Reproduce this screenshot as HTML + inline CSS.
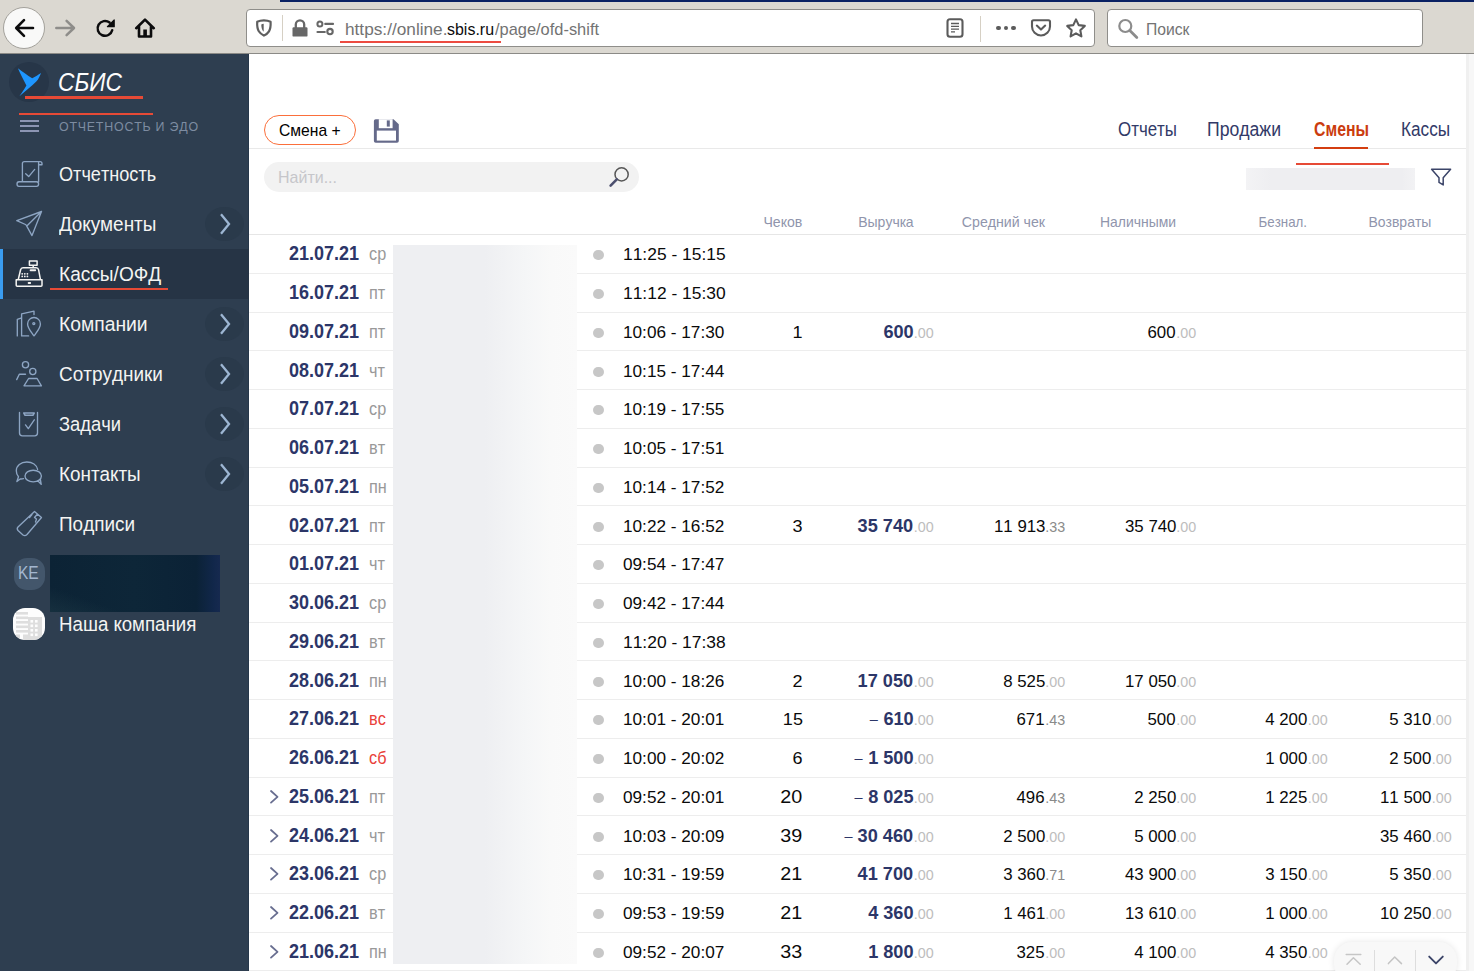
<!DOCTYPE html>
<html lang="ru"><head><meta charset="utf-8"><title>СБИС — Смены</title>
<style>
html,body{margin:0;padding:0;}
body{width:1474px;height:971px;overflow:hidden;position:relative;background:#fff;font-family:"Liberation Sans",sans-serif;font-kerning:none;}
.b{position:absolute;display:block;}
.t{position:absolute;white-space:pre;line-height:1;font-kerning:none;}
</style></head><body>
<div class="b" style="left:0px;top:0px;width:1474px;height:53px;background:#dbd8d1;"></div>
<div class="b" style="left:0px;top:53px;width:1474px;height:1px;background:#8b8a86;"></div>
<div class="b" style="left:280px;top:0px;width:1194px;height:2px;background:#0a2163;"></div>
<div class="b" style="left:3px;top:7px;width:42px;height:42px;border-radius:50%;background:#f9f9f8;border:1px solid #a3a19b;box-sizing:border-box;"></div>
<svg class="b" style="left:11.5px;top:16px;" width="24" height="24" viewBox="0 0 24 24"><path d="M21 12H4.5M12 4.2L4.2 12l7.8 7.8" fill="none" stroke="#0c0c0d" stroke-width="2.6" stroke-linecap="round" stroke-linejoin="round"/></svg>
<svg class="b" style="left:54px;top:17px;" width="23" height="22" viewBox="0 0 23 22"><path d="M2.300 11h17.500M12.600 3.800l7.400 7.200-7.400 7.200" fill="none" stroke="#8e8d8a" stroke-width="2.500" stroke-linecap="round" stroke-linejoin="round"/></svg>
<svg class="b" style="left:94px;top:17px;" width="23" height="22" viewBox="0 0 23 22"><path d="M18.200 13.200a7.400 7.400 0 1 1-2.600-7.600" fill="none" stroke="#0c0c0d" stroke-width="2.500" stroke-linecap="round"/><path d="M13.400 9.700h6.800V2.900z" fill="#0c0c0d" stroke="#0c0c0d" stroke-width="1.200" stroke-linejoin="round"/></svg>
<svg class="b" style="left:134px;top:16px;" width="22" height="24" viewBox="0 0 22 24"><path d="M2.2 12.2L11 3.6l8.8 8.6M5 10.5v10h12v-10" fill="none" stroke="#0c0c0d" stroke-width="2.6" stroke-linecap="round" stroke-linejoin="round"/><rect x="9.3" y="13.5" width="3.6" height="6.5" fill="#0c0c0d"/></svg>
<div class="b" style="left:246px;top:9px;width:849px;height:38px;background:#fff;border:1px solid #8f8e8a;border-radius:4px;box-sizing:border-box;"></div>
<svg class="b" style="left:254px;top:17px;" width="20" height="22" viewBox="0 0 20 22"><path d="M9.900 3.400C7.500 3.400 5 3.900 3.200 4.800 3 9 3.400 12 4.800 14.300 6 16.200 7.800 17.500 9.900 18.600 12 17.500 13.800 16.200 15 14.300 16.400 12 16.800 9 16.600 4.800 14.800 3.900 12.300 3.400 9.900 3.400z" fill="none" stroke="#5f5f5f" stroke-width="2.200" stroke-linejoin="round"/><path d="M9.700 6.800v8C8 13.300 7.300 10.300 7.300 7.400 8 7.100 8.900 6.900 9.700 6.800z" fill="#5f5f5f"/></svg>
<div class="b" style="left:282px;top:15px;width:1px;height:26px;background:#d6d0c4;"></div>
<svg class="b" style="left:291px;top:17px;" width="18" height="22" viewBox="0 0 18 22"><path d="M4.800 11V7.600a4.200 4.200 0 0 1 8.400 0V11" fill="none" stroke="#676767" stroke-width="2.300"/><rect x="1.500" y="10.200" width="15" height="9.400" rx="1.200" fill="#676767"/></svg>
<svg class="b" style="left:315px;top:18px;" width="22" height="20" viewBox="0 0 22 20"><circle cx="4.900" cy="5.900" r="2.500" fill="none" stroke="#676767" stroke-width="2"/><path d="M10.300 5.900H18" stroke="#676767" stroke-width="2.200" stroke-linecap="round"/><circle cx="15" cy="13.600" r="2.700" fill="none" stroke="#676767" stroke-width="2.100"/><path d="M2.500 14h7.300" stroke="#676767" stroke-width="2.200" stroke-linecap="round"/></svg>
<div class="t" style="top:21px;font-size:17px;color:#737373;left:344.50px;transform:scaleX(1.0136);transform-origin:0 50%;">https://online.</div>
<div class="t" style="top:21px;font-size:17px;color:#0c0c0d;left:447.00px;transform:scaleX(0.9387);transform-origin:0 50%;">sbis.ru</div>
<div class="t" style="top:21px;font-size:17px;color:#737373;left:494.50px;transform:scaleX(0.9653);transform-origin:0 50%;">/page/ofd-shift</div>
<div class="b" style="left:340.3px;top:41.35px;width:160.7px;height:1.95px;background:#ec4b40;"></div>
<svg class="b" style="left:945px;top:17px;" width="20" height="22" viewBox="0 0 20 22"><rect x="2.500" y="2.200" width="15" height="17.600" rx="2.500" fill="none" stroke="#5b5b5b" stroke-width="2.100"/><path d="M6 6.500h8M6 9.300h8M6 12.100h8M6 14.900h4" stroke="#5b5b5b" stroke-width="1.300"/></svg>
<div class="b" style="left:980px;top:16px;width:1px;height:26px;background:#d6d0c4;"></div>
<div class="b" style="left:996.4000000000001px;top:25.6px;width:4.6px;height:4.6px;border-radius:50%;background:#5b5b5b;"></div>
<div class="b" style="left:1003.7px;top:25.6px;width:4.6px;height:4.6px;border-radius:50%;background:#5b5b5b;"></div>
<div class="b" style="left:1011.0px;top:25.6px;width:4.6px;height:4.6px;border-radius:50%;background:#5b5b5b;"></div>
<svg class="b" style="left:1030px;top:18px;" width="22" height="20" viewBox="0 0 22 20"><path d="M3.500 2.300h15a1.500 1.500 0 0 1 1.500 1.500v4.700a9 9 0 0 1-18 0V3.800a1.500 1.500 0 0 1 1.500-1.500z" fill="none" stroke="#5b5b5b" stroke-width="2.100"/><path d="M6.800 7.600L11 11.600l4.200-4" fill="none" stroke="#5b5b5b" stroke-width="2.100" stroke-linecap="round" stroke-linejoin="round"/></svg>
<svg class="b" style="left:1065px;top:17px;" width="22" height="22" viewBox="0 0 22 22"><path d="M11 2.400l2.700 5.700 6.100.8-4.500 4.300 1.100 6.200L11 16.400 5.600 19.400l1.100-6.200L2.200 8.900l6.100-.8z" fill="none" stroke="#5b5b5b" stroke-width="2.100" stroke-linejoin="round"/></svg>
<div class="b" style="left:1107px;top:9px;width:316px;height:38px;background:#fff;border:1px solid #8f8e8a;border-radius:4px;box-sizing:border-box;"></div>
<svg class="b" style="left:1116px;top:17px;" width="24" height="24" viewBox="0 0 24 24"><circle cx="9.300" cy="9" r="6" fill="none" stroke="#8c8c8c" stroke-width="2.200"/><path d="M13.800 13.600l7 7" stroke="#8c8c8c" stroke-width="2.800" stroke-linecap="round"/></svg>
<div class="t" style="top:21px;font-size:16.3px;color:#737373;left:1146.20px;transform:scaleX(0.9631);transform-origin:0 50%;">Поиск</div>
<div class="b" style="left:0px;top:54px;width:249px;height:917px;background:#2e3e50;"></div>
<div class="b" style="left:248px;top:54px;width:1px;height:917px;background:#26374a;"></div>
<div class="b" style="left:9px;top:62px;width:40px;height:40px;border-radius:50%;background:#273648;"></div>
<svg class="b" style="left:9px;top:62px;" width="40" height="40" viewBox="9 62 40 40"><path d="M17.900 68.200C22 71 27.500 75.600 32.200 78.200c3.300-1.600 6-3.600 8.900-5.300-1.300 3-2.600 6.200-4.800 8.600C31.400 86.500 24.500 91.500 19.400 96.200c2.300-3.400 5-7 7-10.800C23.500 80 20.500 74 17.900 68.200z" fill="#1e96ff"/></svg>
<div class="t" style="top:70px;font-size:25px;color:#fdfdfd;font-style:italic;left:58.20px;transform:scaleX(0.9109);transform-origin:0 50%;">СБИС</div>
<div class="b" style="left:25px;top:96px;width:118px;height:2.6px;background:#e64a36;"></div>
<div class="b" style="left:19px;top:112.6px;width:134px;height:2.6px;background:#e64a36;"></div>
<div class="b" style="left:20px;top:120.3px;width:18.5px;height:1.6px;background:#8c95b3;"></div>
<div class="b" style="left:20px;top:125.3px;width:18.5px;height:1.6px;background:#8c95b3;"></div>
<div class="b" style="left:20px;top:130.3px;width:18.5px;height:1.6px;background:#8c95b3;"></div>
<div class="t" style="top:120px;font-size:13px;color:#7d8ca1;letter-spacing:0.8px;left:59.30px;transform:scaleX(0.9556);transform-origin:0 50%;">ОТЧЕТНОСТЬ И ЭДО</div>
<div class="b" style="left:0px;top:249px;width:249px;height:50px;background:#263445;"></div>
<div class="b" style="left:0px;top:249px;width:3px;height:50px;background:#3a9cf0;"></div>
<div class="t" style="top:165px;font-size:19.3px;color:#f4f4f2;left:59.00px;transform:scaleX(0.9408);transform-origin:0 50%;">Отчетность</div>
<div class="t" style="top:215px;font-size:19.3px;color:#f4f4f2;left:59.00px;transform:scaleX(0.9820);transform-origin:0 50%;">Документы</div>
<div class="b" style="left:205px;top:206.7px;width:39px;height:34.6px;border-radius:50%;background:#2a3a4b;"></div>
<svg class="b" style="left:216px;top:212px;" width="16" height="24" viewBox="0 0 16 24"><path d="M5 2.200l8 9.800-8 9.800" fill="none" stroke="#9db6d3" stroke-width="2.300" stroke-linejoin="miter"/></svg>
<div class="t" style="top:265px;font-size:19.3px;color:#f4f4f2;left:59.00px;transform:scaleX(0.9910);transform-origin:0 50%;">Кассы/ОФД</div>
<div class="t" style="top:315px;font-size:19.3px;color:#f4f4f2;left:59.00px;transform:scaleX(1.0006);transform-origin:0 50%;">Компании</div>
<div class="b" style="left:205px;top:306.7px;width:39px;height:34.6px;border-radius:50%;background:#2a3a4b;"></div>
<svg class="b" style="left:216px;top:312px;" width="16" height="24" viewBox="0 0 16 24"><path d="M5 2.200l8 9.800-8 9.800" fill="none" stroke="#9db6d3" stroke-width="2.300" stroke-linejoin="miter"/></svg>
<div class="t" style="top:365px;font-size:19.3px;color:#f4f4f2;left:59.00px;transform:scaleX(0.9824);transform-origin:0 50%;">Сотрудники</div>
<div class="b" style="left:205px;top:356.7px;width:39px;height:34.6px;border-radius:50%;background:#2a3a4b;"></div>
<svg class="b" style="left:216px;top:362px;" width="16" height="24" viewBox="0 0 16 24"><path d="M5 2.200l8 9.800-8 9.800" fill="none" stroke="#9db6d3" stroke-width="2.300" stroke-linejoin="miter"/></svg>
<div class="t" style="top:415px;font-size:19.3px;color:#f4f4f2;left:59.00px;transform:scaleX(0.9522);transform-origin:0 50%;">Задачи</div>
<div class="b" style="left:205px;top:406.7px;width:39px;height:34.6px;border-radius:50%;background:#2a3a4b;"></div>
<svg class="b" style="left:216px;top:412px;" width="16" height="24" viewBox="0 0 16 24"><path d="M5 2.200l8 9.800-8 9.800" fill="none" stroke="#9db6d3" stroke-width="2.300" stroke-linejoin="miter"/></svg>
<div class="t" style="top:465px;font-size:19.3px;color:#f4f4f2;left:59.00px;transform:scaleX(0.9800);transform-origin:0 50%;">Контакты</div>
<div class="b" style="left:205px;top:456.7px;width:39px;height:34.6px;border-radius:50%;background:#2a3a4b;"></div>
<svg class="b" style="left:216px;top:462px;" width="16" height="24" viewBox="0 0 16 24"><path d="M5 2.200l8 9.800-8 9.800" fill="none" stroke="#9db6d3" stroke-width="2.300" stroke-linejoin="miter"/></svg>
<div class="t" style="top:515px;font-size:19.3px;color:#f4f4f2;left:59.00px;transform:scaleX(0.9818);transform-origin:0 50%;">Подписи</div>
<div class="b" style="left:50px;top:287.5px;width:118px;height:2.4px;background:#e64a36;"></div>
<svg class="b" style="left:14px;top:159px;" width="30" height="30" viewBox="0 0 30 30"><g fill="none" stroke="#8da5c3" stroke-width="1.350" stroke-linecap="round" stroke-linejoin="round"><path d="M8.400 22.700V4.600q0-2 2-2h15.600q2 0 2 2v1.100h-3.400M24.600 3.600V22.700M5 22.700h17.500q2.100 0 2.100 2.300t-2.100 2.300H5q-2 0-2-2.300t2-2.300z"/><path d="M11.700 14.800l3 2.800 6-7.200" /></g></svg>
<svg class="b" style="left:14px;top:209px;" width="30" height="30" viewBox="0 0 30 30"><g fill="none" stroke="#8da5c3" stroke-width="1.350" stroke-linecap="round" stroke-linejoin="round"><path d="M27.500 2.500L2.800 11.700l8.700 3.800M27.500 2.500L18 26.600l-5.800-10.400M27.500 2.500L12.800 17"/></g></svg>
<svg class="b" style="left:14px;top:259px;" width="30" height="30" viewBox="0 0 30 30"><g fill="none" stroke="#f4f4f2" stroke-width="1.350" stroke-linecap="round" stroke-linejoin="round"><path d="M15.400 2h7.700v4.200h-7.700zM19.200 6.200v2.600M4.200 20.800L6.600 10.800Q7 8.800 9 8.800h13.200q2 0 2.400 2L26.500 20.800M2.200 20.800h25.800v5.500q0 1-1 1H3.200q-1 0-1-1z" stroke-width="1.500"/><path d="M8.200 14.800h.01M10.800 14.800h.01M13.400 14.800h.01M8.200 17.400h.01M10.800 17.400h.01M13.400 17.400h.01M14.600 24h1.600" stroke-width="1.800"/><path d="M16.600 11.300h4.600" stroke-width="1.900"/></g></svg>
<svg class="b" style="left:14px;top:309px;" width="30" height="30" viewBox="0 0 30 30"><g fill="none" stroke="#8da5c3" stroke-width="1.350" stroke-linecap="round" stroke-linejoin="round"><path d="M3.300 26.900V10.300l4.300-1.500M7.600 26.900V4.900L20 2.100v3.400M7.600 26.900h7"/><path d="M20 26.900c-2.900-4.300-6.400-7.800-6.400-12a6.400 6.400 0 0 1 12.800 0c0 4.200-3.500 7.700-6.400 12z"/><circle cx="19.800" cy="14.600" r="1" /></g></svg>
<svg class="b" style="left:14px;top:359px;" width="30" height="30" viewBox="0 0 30 30"><g fill="none" stroke="#8da5c3" stroke-width="1.350" stroke-linecap="round" stroke-linejoin="round"><circle cx="11.500" cy="5.700" r="3.100"/><circle cx="18.800" cy="12.500" r="3.100"/><path d="M2.700 20.600l2.600-5.400h6.200M10 26.800l4.600-7.300h8.500l4.300 7.300z"/></g></svg>
<svg class="b" style="left:14px;top:409px;" width="30" height="30" viewBox="0 0 30 30"><g fill="none" stroke="#8da5c3" stroke-width="1.350" stroke-linecap="round" stroke-linejoin="round"><path d="M5.500 3.500V24q0 2.800 2.800 2.800h12.400q2.800 0 2.800-2.800V3.500"/><path d="M9.800 4h10.400l-1.300 2.300h-7.800z" stroke-width="1.600"/><path d="M11.500 15.900l2.800 3.700 6-8.800"/></g></svg>
<svg class="b" style="left:14px;top:459px;" width="30" height="30" viewBox="0 0 30 30"><g fill="none" stroke="#8da5c3" stroke-width="1.350" stroke-linecap="round" stroke-linejoin="round"><path d="M9.500 19.600c-1.200.4-2.300.5-3.300.4l-3.300 2.500 1.600-4.800C3 16 2.300 13.900 2.300 11.700 2.300 6.800 6.800 3 12.800 3c5.600 0 9.900 3 10.800 7.400"/><path d="M27.400 17c0 3.300-3.600 5.800-8.200 5.800S11 20.300 11 17s3.600-5.800 8.200-5.800 8.200 2.500 8.200 5.800zM23.800 21.800l3.400 3.600-.9-5.400"/></g></svg>
<svg class="b" style="left:14px;top:509px;" width="30" height="30" viewBox="0 0 30 30"><g fill="none" stroke="#8da5c3" stroke-width="1.350" stroke-linecap="round" stroke-linejoin="round"><path d="M20.500 2.500l7 6-14.500 17q-2 2-4 .500l-5-4.500q-1.500-2 0-3.500z M18 5.500l-2.500 3M23.500 5l-3 3.500 2 1.500-1 3"/></g></svg>
<div class="b" style="left:13.5px;top:558px;width:31.5px;height:32px;border-radius:13px;background:#43566b;"></div>
<div class="t" style="top:564px;font-size:18px;color:#a3b6cf;left:17.80px;transform:scaleX(0.8620);transform-origin:0 50%;">KE</div>
<div class="b" style="left:50px;top:555px;width:170px;height:57px;background:linear-gradient(90deg,#0c2335 0%,#0d2638 50%,#0b2236 86%,#11274a 96%,#16294f 100%);"></div>
<div class="b" style="left:50px;top:555px;width:170px;height:57px;background:linear-gradient(20deg,rgba(40,70,80,.35) 0%,rgba(0,0,0,0) 22%);"></div>
<div class="b" style="left:13px;top:608px;width:32px;height:32px;border-radius:12px;background:#fdfdfd;overflow:hidden;"></div>
<svg class="b" style="left:13px;top:608px;" width="32" height="32" viewBox="0 0 32 32"><clipPath id="cp"><rect width="32" height="32" rx="12"/></clipPath><g clip-path="url(#cp)" fill="#dedede"><rect x="3" y="4" width="12" height="2.600"/><rect x="3" y="8.500" width="12" height="2.600"/><rect x="3" y="13" width="12" height="2.600"/><rect x="3" y="17.500" width="12" height="2.600"/><rect x="3" y="22" width="12" height="2.600"/><rect x="3" y="26.500" width="4" height="6"/><rect x="10" y="26.500" width="5" height="6"/><rect x="15" y="9" width="14" height="23"/><g fill="#fdfdfd"><rect x="17.500" y="12" width="2.600" height="2.600"/><rect x="22" y="12" width="2.600" height="2.600"/><rect x="17.500" y="16.500" width="2.600" height="2.600"/><rect x="22" y="16.500" width="2.600" height="2.600"/><rect x="17.500" y="21" width="2.600" height="2.600"/><rect x="22" y="21" width="2.600" height="2.600"/><rect x="17.500" y="25.500" width="2.600" height="2.600"/><rect x="22" y="25.500" width="2.600" height="2.600"/></g></g></svg>
<div class="t" style="top:615px;font-size:19.3px;color:#f4f4f2;left:59.40px;transform:scaleX(0.9698);transform-origin:0 50%;">Наша компания</div>
<div class="b" style="left:249px;top:54px;width:1217px;height:917px;background:#fff;"></div>
<div class="b" style="left:1466px;top:54px;width:8px;height:917px;background:linear-gradient(90deg,#f0f0f0 0,#f0f0f0 3px,#f7f7f7 3px);"></div>
<div class="b" style="left:264px;top:115px;width:92px;height:30px;border:1px solid #fb6f3b;border-radius:15px;box-sizing:border-box;background:#fff;"></div>
<div class="t" style="top:122px;font-size:17px;color:#000;left:279.40px;transform:scaleX(0.9206);transform-origin:0 50%;">Смена +</div>
<svg class="b" style="left:373px;top:117.6px;" width="27" height="26" viewBox="0 0 27 26"><path d="M2.700 1.200h17.800l5.300 5V23a1.800 1.800 0 0 1-1.800 1.800H2.700A1.800 1.800 0 0 1 .900 23V3a1.800 1.800 0 0 1 1.800-1.800z" fill="#656a8a"/><rect x="3.800" y="12.600" width="19.200" height="10" fill="#fff"/><rect x="5.800" y="1.200" width="13.800" height="9" fill="#fff"/><rect x="13.800" y="2.400" width="3" height="6.200" fill="#656a8a"/></svg>
<div class="b" style="left:249px;top:148px;width:1217px;height:1px;background:#e9e9e9;"></div>
<div class="t" style="top:120px;font-size:19.5px;color:#323a68;left:1118.30px;transform:scaleX(0.8664);transform-origin:0 50%;">Отчеты</div>
<div class="t" style="top:120px;font-size:19.5px;color:#323a68;left:1207.30px;transform:scaleX(0.9037);transform-origin:0 50%;">Продажи</div>
<div class="t" style="top:120px;font-size:19.5px;color:#cb3c0f;font-weight:700;left:1313.50px;transform:scaleX(0.8114);transform-origin:0 50%;">Смены</div>
<div class="t" style="top:120px;font-size:19.5px;color:#323a68;left:1400.60px;transform:scaleX(0.8830);transform-origin:0 50%;">Кассы</div>
<div class="b" style="left:1314px;top:146.6px;width:54px;height:2.2px;background:#d43e10;"></div>
<div class="b" style="left:1296px;top:162.8px;width:93px;height:2.2px;background:#e64a36;"></div>
<div class="b" style="left:264px;top:162px;width:375px;height:30px;background:#f2f2f2;border-radius:15px;"></div>
<div class="t" style="top:169px;font-size:17px;color:#c6c6ca;left:278.20px;transform:scaleX(0.9413);transform-origin:0 50%;">Найти...</div>
<svg class="b" style="left:607px;top:165px;" width="25" height="24" viewBox="0 0 25 24"><circle cx="14.600" cy="9.400" r="6.600" fill="none" stroke="#565656" stroke-width="1.500"/><path d="M9.800 14.400L3.600 20.600" stroke="#4c4f6e" stroke-width="2.600" stroke-linecap="round"/></svg>
<div class="b" style="left:1246px;top:168px;width:169px;height:22px;background:linear-gradient(90deg,#f3f3f5 0,#eeeef1 15%,#eeeef1 92%,#f2f2f4 100%);"></div>
<svg class="b" style="left:1429px;top:167.3px;" width="24" height="20" viewBox="0 0 24 20"><path d="M2.600 2.200h19l-7.400 8.500v7.200l-4.200-2.500v-4.700z" fill="none" stroke="#3b4468" stroke-width="1.500" stroke-linejoin="round"/></svg>
<div class="t" style="top:215px;font-size:14.3px;color:#9095ac;right:672.00px;transform:scaleX(0.9886);transform-origin:100% 50%;">Чеков</div>
<div class="t" style="top:215px;font-size:14.3px;color:#9095ac;right:560.50px;transform:scaleX(0.9783);transform-origin:100% 50%;">Выручка</div>
<div class="t" style="top:215px;font-size:14.3px;color:#9095ac;right:429.00px;transform:scaleX(0.9908);transform-origin:100% 50%;">Средний чек</div>
<div class="t" style="top:215px;font-size:14.3px;color:#9095ac;right:298.00px;transform:scaleX(0.9736);transform-origin:100% 50%;">Наличными</div>
<div class="t" style="top:215px;font-size:14.3px;color:#9095ac;right:166.50px;transform:scaleX(0.9314);transform-origin:100% 50%;">Безнал.</div>
<div class="t" style="top:215px;font-size:14.3px;color:#9095ac;right:42.50px;transform:scaleX(0.9780);transform-origin:100% 50%;">Возвраты</div>
<div class="b" style="left:249px;top:234px;width:1217px;height:1px;background:#e6e6e6;"></div>
<div class="b" style="left:249px;top:273px;width:1217px;height:1px;background:#ededed;"></div>
<div class="t" style="top:244px;font-size:19.6px;color:#2c3668;font-weight:700;left:289.00px;transform:scaleX(0.9175);transform-origin:0 50%;">21.07.21</div>
<div class="t" style="top:246px;font-size:17.5px;color:#999;left:369.00px;transform:scaleX(0.9300);transform-origin:0 50%;">ср</div>
<div class="b" style="left:593.3px;top:250px;width:10.4px;height:10.4px;border-radius:50%;background:#c7c7c7;"></div>
<div class="t" style="top:246px;font-size:17px;color:#0a0a0a;left:622.60px;transform:scaleX(1.0239);transform-origin:0 50%;">11:25 - 15:15</div>
<div class="b" style="left:249px;top:312px;width:1217px;height:1px;background:#ededed;"></div>
<div class="t" style="top:283px;font-size:19.6px;color:#2c3668;font-weight:700;left:289.00px;transform:scaleX(0.9175);transform-origin:0 50%;">16.07.21</div>
<div class="t" style="top:285px;font-size:17.5px;color:#999;left:369.00px;transform:scaleX(0.9300);transform-origin:0 50%;">пт</div>
<div class="b" style="left:593.3px;top:289px;width:10.4px;height:10.4px;border-radius:50%;background:#c7c7c7;"></div>
<div class="t" style="top:285px;font-size:17px;color:#0a0a0a;left:622.60px;transform:scaleX(1.0239);transform-origin:0 50%;">11:12 - 15:30</div>
<div class="b" style="left:249px;top:350px;width:1217px;height:1px;background:#ededed;"></div>
<div class="t" style="top:322px;font-size:19.6px;color:#2c3668;font-weight:700;left:289.00px;transform:scaleX(0.9175);transform-origin:0 50%;">09.07.21</div>
<div class="t" style="top:324px;font-size:17.5px;color:#999;left:369.00px;transform:scaleX(0.9300);transform-origin:0 50%;">пт</div>
<div class="b" style="left:593.3px;top:328px;width:10.4px;height:10.4px;border-radius:50%;background:#c7c7c7;"></div>
<div class="t" style="top:324px;font-size:17px;color:#0a0a0a;left:622.60px;transform:scaleX(1.0111);transform-origin:0 50%;">10:06 - 17:30</div>
<div class="t" style="top:324px;font-size:17px;color:#0a0a0a;right:671.50px;transform:scaleX(1.0600);transform-origin:100% 50%;">1</div>
<div class="t" style="top:322px;font-size:19px;color:#2c3668;font-weight:700;right:560.50px;transform:scaleX(0.9550);transform-origin:100% 50%;">600</div>
<div class="t" style="top:326px;font-size:14.3px;color:#bdbdbd;left:913.80px;">.00</div>
<div class="t" style="top:324px;font-size:16.5px;color:#0a0a0a;right:298.00px;transform:scaleX(1.0200);transform-origin:100% 50%;">600</div>
<div class="t" style="top:326px;font-size:14.3px;color:#bdbdbd;left:1176.30px;">.00</div>
<div class="b" style="left:249px;top:389px;width:1217px;height:1px;background:#ededed;"></div>
<div class="t" style="top:361px;font-size:19.6px;color:#2c3668;font-weight:700;left:289.00px;transform:scaleX(0.9175);transform-origin:0 50%;">08.07.21</div>
<div class="t" style="top:363px;font-size:17.5px;color:#999;left:369.00px;transform:scaleX(0.9300);transform-origin:0 50%;">чт</div>
<div class="b" style="left:593.3px;top:367px;width:10.4px;height:10.4px;border-radius:50%;background:#c7c7c7;"></div>
<div class="t" style="top:363px;font-size:17px;color:#0a0a0a;left:622.60px;transform:scaleX(1.0111);transform-origin:0 50%;">10:15 - 17:44</div>
<div class="b" style="left:249px;top:428px;width:1217px;height:1px;background:#ededed;"></div>
<div class="t" style="top:399px;font-size:19.6px;color:#2c3668;font-weight:700;left:289.00px;transform:scaleX(0.9175);transform-origin:0 50%;">07.07.21</div>
<div class="t" style="top:401px;font-size:17.5px;color:#999;left:369.00px;transform:scaleX(0.9300);transform-origin:0 50%;">ср</div>
<div class="b" style="left:593.3px;top:405px;width:10.4px;height:10.4px;border-radius:50%;background:#c7c7c7;"></div>
<div class="t" style="top:401px;font-size:17px;color:#0a0a0a;left:622.60px;transform:scaleX(1.0111);transform-origin:0 50%;">10:19 - 17:55</div>
<div class="b" style="left:249px;top:467px;width:1217px;height:1px;background:#ededed;"></div>
<div class="t" style="top:438px;font-size:19.6px;color:#2c3668;font-weight:700;left:289.00px;transform:scaleX(0.9175);transform-origin:0 50%;">06.07.21</div>
<div class="t" style="top:440px;font-size:17.5px;color:#999;left:369.00px;transform:scaleX(0.9300);transform-origin:0 50%;">вт</div>
<div class="b" style="left:593.3px;top:444px;width:10.4px;height:10.4px;border-radius:50%;background:#c7c7c7;"></div>
<div class="t" style="top:440px;font-size:17px;color:#0a0a0a;left:622.60px;transform:scaleX(1.0111);transform-origin:0 50%;">10:05 - 17:51</div>
<div class="b" style="left:249px;top:505px;width:1217px;height:1px;background:#ededed;"></div>
<div class="t" style="top:477px;font-size:19.6px;color:#2c3668;font-weight:700;left:289.00px;transform:scaleX(0.9175);transform-origin:0 50%;">05.07.21</div>
<div class="t" style="top:479px;font-size:17.5px;color:#999;left:369.00px;transform:scaleX(0.9300);transform-origin:0 50%;">пн</div>
<div class="b" style="left:593.3px;top:483px;width:10.4px;height:10.4px;border-radius:50%;background:#c7c7c7;"></div>
<div class="t" style="top:479px;font-size:17px;color:#0a0a0a;left:622.60px;transform:scaleX(1.0111);transform-origin:0 50%;">10:14 - 17:52</div>
<div class="b" style="left:249px;top:544px;width:1217px;height:1px;background:#ededed;"></div>
<div class="t" style="top:516px;font-size:19.6px;color:#2c3668;font-weight:700;left:289.00px;transform:scaleX(0.9175);transform-origin:0 50%;">02.07.21</div>
<div class="t" style="top:518px;font-size:17.5px;color:#999;left:369.00px;transform:scaleX(0.9300);transform-origin:0 50%;">пт</div>
<div class="b" style="left:593.3px;top:522px;width:10.4px;height:10.4px;border-radius:50%;background:#c7c7c7;"></div>
<div class="t" style="top:518px;font-size:17px;color:#0a0a0a;left:622.60px;transform:scaleX(1.0111);transform-origin:0 50%;">10:22 - 16:52</div>
<div class="t" style="top:518px;font-size:17px;color:#0a0a0a;right:671.50px;transform:scaleX(1.0600);transform-origin:100% 50%;">3</div>
<div class="t" style="top:516px;font-size:19px;color:#2c3668;font-weight:700;right:560.50px;transform:scaleX(0.9550);transform-origin:100% 50%;">35 740</div>
<div class="t" style="top:520px;font-size:14.3px;color:#bdbdbd;left:913.80px;">.00</div>
<div class="t" style="top:518px;font-size:16.5px;color:#0a0a0a;right:429.00px;transform:scaleX(1.0200);transform-origin:100% 50%;">11 913</div>
<div class="t" style="top:520px;font-size:14.3px;color:#8a8a8a;left:1045.30px;">.33</div>
<div class="t" style="top:518px;font-size:16.5px;color:#0a0a0a;right:298.00px;transform:scaleX(1.0200);transform-origin:100% 50%;">35 740</div>
<div class="t" style="top:520px;font-size:14.3px;color:#bdbdbd;left:1176.30px;">.00</div>
<div class="b" style="left:249px;top:583px;width:1217px;height:1px;background:#ededed;"></div>
<div class="t" style="top:554px;font-size:19.6px;color:#2c3668;font-weight:700;left:289.00px;transform:scaleX(0.9175);transform-origin:0 50%;">01.07.21</div>
<div class="t" style="top:556px;font-size:17.5px;color:#999;left:369.00px;transform:scaleX(0.9300);transform-origin:0 50%;">чт</div>
<div class="b" style="left:593.3px;top:560px;width:10.4px;height:10.4px;border-radius:50%;background:#c7c7c7;"></div>
<div class="t" style="top:556px;font-size:17px;color:#0a0a0a;left:622.60px;transform:scaleX(1.0111);transform-origin:0 50%;">09:54 - 17:47</div>
<div class="b" style="left:249px;top:622px;width:1217px;height:1px;background:#ededed;"></div>
<div class="t" style="top:593px;font-size:19.6px;color:#2c3668;font-weight:700;left:289.00px;transform:scaleX(0.9175);transform-origin:0 50%;">30.06.21</div>
<div class="t" style="top:595px;font-size:17.5px;color:#999;left:369.00px;transform:scaleX(0.9300);transform-origin:0 50%;">ср</div>
<div class="b" style="left:593.3px;top:599px;width:10.4px;height:10.4px;border-radius:50%;background:#c7c7c7;"></div>
<div class="t" style="top:595px;font-size:17px;color:#0a0a0a;left:622.60px;transform:scaleX(1.0111);transform-origin:0 50%;">09:42 - 17:44</div>
<div class="b" style="left:249px;top:660px;width:1217px;height:1px;background:#ededed;"></div>
<div class="t" style="top:632px;font-size:19.6px;color:#2c3668;font-weight:700;left:289.00px;transform:scaleX(0.9175);transform-origin:0 50%;">29.06.21</div>
<div class="t" style="top:634px;font-size:17.5px;color:#999;left:369.00px;transform:scaleX(0.9300);transform-origin:0 50%;">вт</div>
<div class="b" style="left:593.3px;top:638px;width:10.4px;height:10.4px;border-radius:50%;background:#c7c7c7;"></div>
<div class="t" style="top:634px;font-size:17px;color:#0a0a0a;left:622.60px;transform:scaleX(1.0239);transform-origin:0 50%;">11:20 - 17:38</div>
<div class="b" style="left:249px;top:699px;width:1217px;height:1px;background:#ededed;"></div>
<div class="t" style="top:671px;font-size:19.6px;color:#2c3668;font-weight:700;left:289.00px;transform:scaleX(0.9175);transform-origin:0 50%;">28.06.21</div>
<div class="t" style="top:673px;font-size:17.5px;color:#999;left:369.00px;transform:scaleX(0.9300);transform-origin:0 50%;">пн</div>
<div class="b" style="left:593.3px;top:677px;width:10.4px;height:10.4px;border-radius:50%;background:#c7c7c7;"></div>
<div class="t" style="top:673px;font-size:17px;color:#0a0a0a;left:622.60px;transform:scaleX(1.0111);transform-origin:0 50%;">10:00 - 18:26</div>
<div class="t" style="top:673px;font-size:17px;color:#0a0a0a;right:671.50px;transform:scaleX(1.0600);transform-origin:100% 50%;">2</div>
<div class="t" style="top:671px;font-size:19px;color:#2c3668;font-weight:700;right:560.50px;transform:scaleX(0.9550);transform-origin:100% 50%;">17 050</div>
<div class="t" style="top:675px;font-size:14.3px;color:#bdbdbd;left:913.80px;">.00</div>
<div class="t" style="top:673px;font-size:16.5px;color:#0a0a0a;right:429.00px;transform:scaleX(1.0200);transform-origin:100% 50%;">8 525</div>
<div class="t" style="top:675px;font-size:14.3px;color:#bdbdbd;left:1045.30px;">.00</div>
<div class="t" style="top:673px;font-size:16.5px;color:#0a0a0a;right:298.00px;transform:scaleX(1.0200);transform-origin:100% 50%;">17 050</div>
<div class="t" style="top:675px;font-size:14.3px;color:#bdbdbd;left:1176.30px;">.00</div>
<div class="b" style="left:249px;top:738px;width:1217px;height:1px;background:#ededed;"></div>
<div class="t" style="top:709px;font-size:19.6px;color:#2c3668;font-weight:700;left:289.00px;transform:scaleX(0.9175);transform-origin:0 50%;">27.06.21</div>
<div class="t" style="top:711px;font-size:17.5px;color:#e9413a;left:369.00px;transform:scaleX(0.9300);transform-origin:0 50%;">вс</div>
<div class="b" style="left:593.3px;top:715px;width:10.4px;height:10.4px;border-radius:50%;background:#c7c7c7;"></div>
<div class="t" style="top:711px;font-size:17px;color:#0a0a0a;left:622.60px;transform:scaleX(1.0111);transform-origin:0 50%;">10:01 - 20:01</div>
<div class="t" style="top:711px;font-size:17px;color:#0a0a0a;right:671.50px;transform:scaleX(1.0600);transform-origin:100% 50%;">15</div>
<div class="t" style="top:709px;font-size:19px;color:#2c3668;font-weight:700;right:560.50px;transform:scaleX(0.9550);transform-origin:100% 50%;">610</div>
<div class="t" style="top:713px;font-size:14.3px;color:#bdbdbd;left:913.80px;">.00</div>
<div class="t" style="top:712px;font-size:14.5px;color:#2c3668;right:596.28px;">–</div>
<div class="t" style="top:711px;font-size:16.5px;color:#0a0a0a;right:429.00px;transform:scaleX(1.0200);transform-origin:100% 50%;">671</div>
<div class="t" style="top:713px;font-size:14.3px;color:#8a8a8a;left:1045.30px;">.43</div>
<div class="t" style="top:711px;font-size:16.5px;color:#0a0a0a;right:298.00px;transform:scaleX(1.0200);transform-origin:100% 50%;">500</div>
<div class="t" style="top:713px;font-size:14.3px;color:#bdbdbd;left:1176.30px;">.00</div>
<div class="t" style="top:711px;font-size:16.5px;color:#0a0a0a;right:166.50px;transform:scaleX(1.0200);transform-origin:100% 50%;">4 200</div>
<div class="t" style="top:713px;font-size:14.3px;color:#bdbdbd;left:1307.80px;">.00</div>
<div class="t" style="top:711px;font-size:16.5px;color:#0a0a0a;right:42.50px;transform:scaleX(1.0200);transform-origin:100% 50%;">5 310</div>
<div class="t" style="top:713px;font-size:14.3px;color:#bdbdbd;left:1431.80px;">.00</div>
<div class="b" style="left:249px;top:777px;width:1217px;height:1px;background:#ededed;"></div>
<div class="t" style="top:748px;font-size:19.6px;color:#2c3668;font-weight:700;left:289.00px;transform:scaleX(0.9175);transform-origin:0 50%;">26.06.21</div>
<div class="t" style="top:750px;font-size:17.5px;color:#e9413a;left:369.00px;transform:scaleX(0.9300);transform-origin:0 50%;">сб</div>
<div class="b" style="left:593.3px;top:754px;width:10.4px;height:10.4px;border-radius:50%;background:#c7c7c7;"></div>
<div class="t" style="top:750px;font-size:17px;color:#0a0a0a;left:622.60px;transform:scaleX(1.0111);transform-origin:0 50%;">10:00 - 20:02</div>
<div class="t" style="top:750px;font-size:17px;color:#0a0a0a;right:671.50px;transform:scaleX(1.0600);transform-origin:100% 50%;">6</div>
<div class="t" style="top:748px;font-size:19px;color:#2c3668;font-weight:700;right:560.50px;transform:scaleX(0.9550);transform-origin:100% 50%;">1 500</div>
<div class="t" style="top:752px;font-size:14.3px;color:#bdbdbd;left:913.80px;">.00</div>
<div class="t" style="top:751px;font-size:14.5px;color:#2c3668;right:611.41px;">–</div>
<div class="t" style="top:750px;font-size:16.5px;color:#0a0a0a;right:166.50px;transform:scaleX(1.0200);transform-origin:100% 50%;">1 000</div>
<div class="t" style="top:752px;font-size:14.3px;color:#bdbdbd;left:1307.80px;">.00</div>
<div class="t" style="top:750px;font-size:16.5px;color:#0a0a0a;right:42.50px;transform:scaleX(1.0200);transform-origin:100% 50%;">2 500</div>
<div class="t" style="top:752px;font-size:14.3px;color:#bdbdbd;left:1431.80px;">.00</div>
<div class="b" style="left:249px;top:815px;width:1217px;height:1px;background:#ededed;"></div>
<svg class="b" style="left:268px;top:789px;" width="14" height="16" viewBox="0 0 14 16"><path d="M3 2l6.500 5.800-6.500 5.800" fill="none" stroke="#686e90" stroke-width="1.800" stroke-linecap="round" stroke-linejoin="round"/></svg>
<div class="t" style="top:787px;font-size:19.6px;color:#2c3668;font-weight:700;left:289.00px;transform:scaleX(0.9175);transform-origin:0 50%;">25.06.21</div>
<div class="t" style="top:789px;font-size:17.5px;color:#999;left:369.00px;transform:scaleX(0.9300);transform-origin:0 50%;">пт</div>
<div class="b" style="left:593.3px;top:793px;width:10.4px;height:10.4px;border-radius:50%;background:#c7c7c7;"></div>
<div class="t" style="top:789px;font-size:17px;color:#0a0a0a;left:622.60px;transform:scaleX(1.0111);transform-origin:0 50%;">09:52 - 20:01</div>
<div class="t" style="top:787px;font-size:19px;color:#0a0a0a;right:671.70px;transform:scaleX(1.0400);transform-origin:100% 50%;">20</div>
<div class="t" style="top:787px;font-size:19px;color:#2c3668;font-weight:700;right:560.50px;transform:scaleX(0.9550);transform-origin:100% 50%;">8 025</div>
<div class="t" style="top:791px;font-size:14.3px;color:#bdbdbd;left:913.80px;">.00</div>
<div class="t" style="top:790px;font-size:14.5px;color:#2c3668;right:611.41px;">–</div>
<div class="t" style="top:789px;font-size:16.5px;color:#0a0a0a;right:429.00px;transform:scaleX(1.0200);transform-origin:100% 50%;">496</div>
<div class="t" style="top:791px;font-size:14.3px;color:#8a8a8a;left:1045.30px;">.43</div>
<div class="t" style="top:789px;font-size:16.5px;color:#0a0a0a;right:298.00px;transform:scaleX(1.0200);transform-origin:100% 50%;">2 250</div>
<div class="t" style="top:791px;font-size:14.3px;color:#bdbdbd;left:1176.30px;">.00</div>
<div class="t" style="top:789px;font-size:16.5px;color:#0a0a0a;right:166.50px;transform:scaleX(1.0200);transform-origin:100% 50%;">1 225</div>
<div class="t" style="top:791px;font-size:14.3px;color:#bdbdbd;left:1307.80px;">.00</div>
<div class="t" style="top:789px;font-size:16.5px;color:#0a0a0a;right:42.50px;transform:scaleX(1.0200);transform-origin:100% 50%;">11 500</div>
<div class="t" style="top:791px;font-size:14.3px;color:#bdbdbd;left:1431.80px;">.00</div>
<div class="b" style="left:249px;top:854px;width:1217px;height:1px;background:#ededed;"></div>
<svg class="b" style="left:268px;top:828px;" width="14" height="16" viewBox="0 0 14 16"><path d="M3 2l6.500 5.800-6.500 5.800" fill="none" stroke="#686e90" stroke-width="1.800" stroke-linecap="round" stroke-linejoin="round"/></svg>
<div class="t" style="top:826px;font-size:19.6px;color:#2c3668;font-weight:700;left:289.00px;transform:scaleX(0.9175);transform-origin:0 50%;">24.06.21</div>
<div class="t" style="top:828px;font-size:17.5px;color:#999;left:369.00px;transform:scaleX(0.9300);transform-origin:0 50%;">чт</div>
<div class="b" style="left:593.3px;top:832px;width:10.4px;height:10.4px;border-radius:50%;background:#c7c7c7;"></div>
<div class="t" style="top:828px;font-size:17px;color:#0a0a0a;left:622.60px;transform:scaleX(1.0111);transform-origin:0 50%;">10:03 - 20:09</div>
<div class="t" style="top:826px;font-size:19px;color:#0a0a0a;right:671.70px;transform:scaleX(1.0400);transform-origin:100% 50%;">39</div>
<div class="t" style="top:826px;font-size:19px;color:#2c3668;font-weight:700;right:560.50px;transform:scaleX(0.9550);transform-origin:100% 50%;">30 460</div>
<div class="t" style="top:830px;font-size:14.3px;color:#bdbdbd;left:913.80px;">.00</div>
<div class="t" style="top:829px;font-size:14.5px;color:#2c3668;right:621.50px;">–</div>
<div class="t" style="top:828px;font-size:16.5px;color:#0a0a0a;right:429.00px;transform:scaleX(1.0200);transform-origin:100% 50%;">2 500</div>
<div class="t" style="top:830px;font-size:14.3px;color:#bdbdbd;left:1045.30px;">.00</div>
<div class="t" style="top:828px;font-size:16.5px;color:#0a0a0a;right:298.00px;transform:scaleX(1.0200);transform-origin:100% 50%;">5 000</div>
<div class="t" style="top:830px;font-size:14.3px;color:#bdbdbd;left:1176.30px;">.00</div>
<div class="t" style="top:828px;font-size:16.5px;color:#0a0a0a;right:42.50px;transform:scaleX(1.0200);transform-origin:100% 50%;">35 460</div>
<div class="t" style="top:830px;font-size:14.3px;color:#bdbdbd;left:1431.80px;">.00</div>
<div class="b" style="left:249px;top:893px;width:1217px;height:1px;background:#ededed;"></div>
<svg class="b" style="left:268px;top:866px;" width="14" height="16" viewBox="0 0 14 16"><path d="M3 2l6.500 5.800-6.500 5.800" fill="none" stroke="#686e90" stroke-width="1.800" stroke-linecap="round" stroke-linejoin="round"/></svg>
<div class="t" style="top:864px;font-size:19.6px;color:#2c3668;font-weight:700;left:289.00px;transform:scaleX(0.9175);transform-origin:0 50%;">23.06.21</div>
<div class="t" style="top:866px;font-size:17.5px;color:#999;left:369.00px;transform:scaleX(0.9300);transform-origin:0 50%;">ср</div>
<div class="b" style="left:593.3px;top:870px;width:10.4px;height:10.4px;border-radius:50%;background:#c7c7c7;"></div>
<div class="t" style="top:866px;font-size:17px;color:#0a0a0a;left:622.60px;transform:scaleX(1.0111);transform-origin:0 50%;">10:31 - 19:59</div>
<div class="t" style="top:864px;font-size:19px;color:#0a0a0a;right:671.70px;transform:scaleX(1.0400);transform-origin:100% 50%;">21</div>
<div class="t" style="top:864px;font-size:19px;color:#2c3668;font-weight:700;right:560.50px;transform:scaleX(0.9550);transform-origin:100% 50%;">41 700</div>
<div class="t" style="top:868px;font-size:14.3px;color:#bdbdbd;left:913.80px;">.00</div>
<div class="t" style="top:866px;font-size:16.5px;color:#0a0a0a;right:429.00px;transform:scaleX(1.0200);transform-origin:100% 50%;">3 360</div>
<div class="t" style="top:868px;font-size:14.3px;color:#8a8a8a;left:1045.30px;">.71</div>
<div class="t" style="top:866px;font-size:16.5px;color:#0a0a0a;right:298.00px;transform:scaleX(1.0200);transform-origin:100% 50%;">43 900</div>
<div class="t" style="top:868px;font-size:14.3px;color:#bdbdbd;left:1176.30px;">.00</div>
<div class="t" style="top:866px;font-size:16.5px;color:#0a0a0a;right:166.50px;transform:scaleX(1.0200);transform-origin:100% 50%;">3 150</div>
<div class="t" style="top:868px;font-size:14.3px;color:#bdbdbd;left:1307.80px;">.00</div>
<div class="t" style="top:866px;font-size:16.5px;color:#0a0a0a;right:42.50px;transform:scaleX(1.0200);transform-origin:100% 50%;">5 350</div>
<div class="t" style="top:868px;font-size:14.3px;color:#bdbdbd;left:1431.80px;">.00</div>
<div class="b" style="left:249px;top:932px;width:1217px;height:1px;background:#ededed;"></div>
<svg class="b" style="left:268px;top:905px;" width="14" height="16" viewBox="0 0 14 16"><path d="M3 2l6.500 5.800-6.500 5.800" fill="none" stroke="#686e90" stroke-width="1.800" stroke-linecap="round" stroke-linejoin="round"/></svg>
<div class="t" style="top:903px;font-size:19.6px;color:#2c3668;font-weight:700;left:289.00px;transform:scaleX(0.9175);transform-origin:0 50%;">22.06.21</div>
<div class="t" style="top:905px;font-size:17.5px;color:#999;left:369.00px;transform:scaleX(0.9300);transform-origin:0 50%;">вт</div>
<div class="b" style="left:593.3px;top:909px;width:10.4px;height:10.4px;border-radius:50%;background:#c7c7c7;"></div>
<div class="t" style="top:905px;font-size:17px;color:#0a0a0a;left:622.60px;transform:scaleX(1.0111);transform-origin:0 50%;">09:53 - 19:59</div>
<div class="t" style="top:903px;font-size:19px;color:#0a0a0a;right:671.70px;transform:scaleX(1.0400);transform-origin:100% 50%;">21</div>
<div class="t" style="top:903px;font-size:19px;color:#2c3668;font-weight:700;right:560.50px;transform:scaleX(0.9550);transform-origin:100% 50%;">4 360</div>
<div class="t" style="top:907px;font-size:14.3px;color:#bdbdbd;left:913.80px;">.00</div>
<div class="t" style="top:905px;font-size:16.5px;color:#0a0a0a;right:429.00px;transform:scaleX(1.0200);transform-origin:100% 50%;">1 461</div>
<div class="t" style="top:907px;font-size:14.3px;color:#bdbdbd;left:1045.30px;">.00</div>
<div class="t" style="top:905px;font-size:16.5px;color:#0a0a0a;right:298.00px;transform:scaleX(1.0200);transform-origin:100% 50%;">13 610</div>
<div class="t" style="top:907px;font-size:14.3px;color:#bdbdbd;left:1176.30px;">.00</div>
<div class="t" style="top:905px;font-size:16.5px;color:#0a0a0a;right:166.50px;transform:scaleX(1.0200);transform-origin:100% 50%;">1 000</div>
<div class="t" style="top:907px;font-size:14.3px;color:#bdbdbd;left:1307.80px;">.00</div>
<div class="t" style="top:905px;font-size:16.5px;color:#0a0a0a;right:42.50px;transform:scaleX(1.0200);transform-origin:100% 50%;">10 250</div>
<div class="t" style="top:907px;font-size:14.3px;color:#bdbdbd;left:1431.80px;">.00</div>
<div class="b" style="left:249px;top:970px;width:1217px;height:1px;background:#ededed;"></div>
<svg class="b" style="left:268px;top:944px;" width="14" height="16" viewBox="0 0 14 16"><path d="M3 2l6.500 5.800-6.500 5.800" fill="none" stroke="#686e90" stroke-width="1.800" stroke-linecap="round" stroke-linejoin="round"/></svg>
<div class="t" style="top:942px;font-size:19.6px;color:#2c3668;font-weight:700;left:289.00px;transform:scaleX(0.9175);transform-origin:0 50%;">21.06.21</div>
<div class="t" style="top:944px;font-size:17.5px;color:#999;left:369.00px;transform:scaleX(0.9300);transform-origin:0 50%;">пн</div>
<div class="b" style="left:593.3px;top:948px;width:10.4px;height:10.4px;border-radius:50%;background:#c7c7c7;"></div>
<div class="t" style="top:944px;font-size:17px;color:#0a0a0a;left:622.60px;transform:scaleX(1.0111);transform-origin:0 50%;">09:52 - 20:07</div>
<div class="t" style="top:942px;font-size:19px;color:#0a0a0a;right:671.70px;transform:scaleX(1.0400);transform-origin:100% 50%;">33</div>
<div class="t" style="top:942px;font-size:19px;color:#2c3668;font-weight:700;right:560.50px;transform:scaleX(0.9550);transform-origin:100% 50%;">1 800</div>
<div class="t" style="top:946px;font-size:14.3px;color:#bdbdbd;left:913.80px;">.00</div>
<div class="t" style="top:944px;font-size:16.5px;color:#0a0a0a;right:429.00px;transform:scaleX(1.0200);transform-origin:100% 50%;">325</div>
<div class="t" style="top:946px;font-size:14.3px;color:#bdbdbd;left:1045.30px;">.00</div>
<div class="t" style="top:944px;font-size:16.5px;color:#0a0a0a;right:298.00px;transform:scaleX(1.0200);transform-origin:100% 50%;">4 100</div>
<div class="t" style="top:946px;font-size:14.3px;color:#bdbdbd;left:1176.30px;">.00</div>
<div class="t" style="top:944px;font-size:16.5px;color:#0a0a0a;right:166.50px;transform:scaleX(1.0200);transform-origin:100% 50%;">4 350</div>
<div class="t" style="top:946px;font-size:14.3px;color:#bdbdbd;left:1307.80px;">.00</div>
<div class="b" style="left:393px;top:245px;width:184px;height:719px;background:linear-gradient(90deg,#eeeff2 0,#eeeff2 50%,#f1f2f4 60%,#f5f6f7 72%,#f9f9f9 86%,#fafafa 100%);"></div>
<div class="b" style="left:1334px;top:942px;width:122.5px;height:40px;border-radius:18px;background:#f8f8f8;box-shadow:0 0 6px rgba(0,0,0,.10);"></div>
<div class="b" style="left:1374px;top:950px;width:1px;height:21px;background:#dddddd;"></div>
<div class="b" style="left:1415px;top:950px;width:1px;height:21px;background:#dddddd;"></div>
<svg class="b" style="left:1343px;top:950px;" width="22" height="20" viewBox="0 0 22 20"><path d="M3.200 4.600h14.600M4 14.300l6.400-6.600 6.800 6.600" fill="none" stroke="#c6c6c6" stroke-width="1.500" stroke-linecap="round" stroke-linejoin="round"/></svg>
<svg class="b" style="left:1385px;top:952px;" width="20" height="16" viewBox="0 0 20 16"><path d="M3.400 11.600l6.300-6.600 6.800 6.600" fill="none" stroke="#c4c4c4" stroke-width="1.500" stroke-linecap="round" stroke-linejoin="round"/></svg>
<svg class="b" style="left:1426px;top:952px;" width="20" height="16" viewBox="0 0 20 16"><path d="M3.200 4.600l6.800 6.800 6.800-6.800" fill="none" stroke="#3b4468" stroke-width="1.900" stroke-linecap="round" stroke-linejoin="round"/></svg>
</body></html>
